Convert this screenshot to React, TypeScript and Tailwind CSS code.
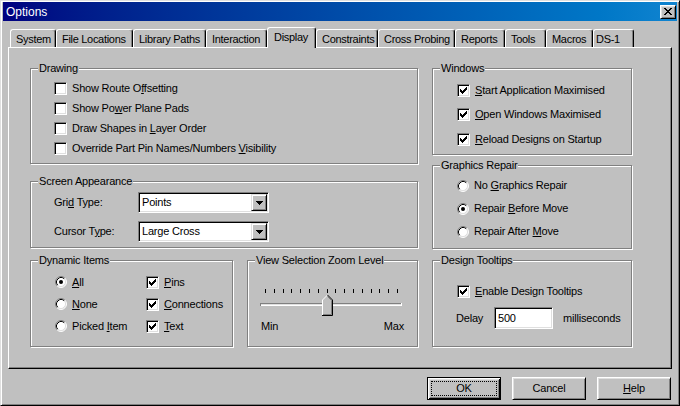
import React from 'react';

// Win98-style bevels
const raised =
  'border border-t-white border-l-white border-r-black border-b-black shadow-[inset_1px_1px_0_#dfdfdf,inset_-1px_-1px_0_#808080]';
const sunken =
  'border border-t-[#808080] border-l-[#808080] border-r-white border-b-white shadow-[inset_1px_1px_0_#000,inset_-1px_-1px_0_#dfdfdf]';

const CHECK = ['......X', '.....XX', 'X...XXX', 'XX.XXX.', 'XXXXX..', '.XXX...', '..X....'];
const CLOSE = ['XX....XX', '.XX..XX.', '..XXXX..', '...XX...', '..XXXX..', '.XX..XX.', 'XX....XX'];
const ARROW = ['XXXXXXX', '.XXXXX.', '..XXX..', '...X...'];

function Pixels({ rows }: { rows: string[] }) {
  const w = rows[0].length;
  const h = rows.length;
  return (
    <svg width={w} height={h} viewBox={`0 0 ${w} ${h}`} shapeRendering="crispEdges" className="block">
      {rows.flatMap((r, y) =>
        r.split('').map((c, x) =>
          c === 'X' ? <rect key={`${x}-${y}`} x={x} y={y} width={1} height={1} fill="#000" /> : null
        )
      )}
    </svg>
  );
}

function U({ children }: { children: React.ReactNode }) {
  return <span className="underline decoration-1 underline-offset-[1px]">{children}</span>;
}

function Check({ on }: { on?: boolean }) {
  return (
    <span className={`w-[13px] h-[13px] shrink-0 bg-white flex items-center justify-center ${sunken}`}>
      {on && <Pixels rows={CHECK} />}
    </span>
  );
}

function Radio({ on }: { on?: boolean }) {
  return (
    <svg width="12" height="12" viewBox="0 0 12 12" className="block shrink-0">
      <circle cx="6" cy="6" r="5" fill="#fff" />
      <path d="M2.11 9.89A5.5 5.5 0 0 1 9.89 2.11" stroke="#808080" fill="none" />
      <path d="M9.89 2.11A5.5 5.5 0 0 1 2.11 9.89" stroke="#fff" fill="none" />
      <path d="M2.82 9.18A4.5 4.5 0 0 1 9.18 2.82" stroke="#000" fill="none" />
      <path d="M9.18 2.82A4.5 4.5 0 0 1 2.82 9.18" stroke="#dfdfdf" fill="none" />
      {on && <circle cx="6" cy="6" r="2" fill="#000" />}
    </svg>
  );
}

function Group({ title, className = '', children }: { title: string; className?: string; children?: React.ReactNode }) {
  return (
    <div className={`relative shrink-0 border border-[#808080] shadow-[1px_1px_0_#fff,inset_1px_1px_0_#fff] ${className}`}>
      <span className="absolute left-[7px] top-[-7px] bg-[#c0c0c0] px-[1px] leading-[13px] whitespace-nowrap">{title}</span>
      {children}
    </div>
  );
}

function Combo({ value }: { value: string }) {
  return (
    <div className={`w-[131px] h-[21px] bg-white flex items-stretch p-[1px] ${sunken}`}>
      <span className="flex-1 pl-[2px] flex items-center">{value}</span>
      <span className="w-[16px] bg-[#c0c0c0] flex items-center justify-center border border-t-[#dfdfdf] border-l-[#dfdfdf] border-r-black border-b-black shadow-[inset_1px_1px_0_#fff,inset_-1px_-1px_0_#808080]">
        <Pixels rows={ARROW} />
      </span>
    </div>
  );
}

const tabs = [
  { label: 'System', w: 'w-[46px]' },
  { label: 'File Locations', w: 'w-[77px]' },
  { label: 'Library Paths', w: 'w-[73px]' },
  { label: 'Interaction', w: 'w-[61px]' },
  { label: 'Display', w: 'w-[49px]', active: true },
  { label: 'Constraints', w: 'w-[62px]' },
  { label: 'Cross Probing', w: 'w-[77px]' },
  { label: 'Reports', w: 'w-[50px]' },
  { label: 'Tools', w: 'w-[41px]' },
  { label: 'Macros', w: 'w-[47px]' },
  { label: 'DS-1', w: 'w-[41px]', tight: true },
];

export default function App() {
  return (
    <div className="w-[680px] h-[406px] overflow-hidden bg-[#c0c0c0] text-black text-[11px] tracking-[-0.2px] font-['Liberation_Sans',Arial,sans-serif] border border-t-[#dfdfdf] border-l-[#dfdfdf] border-r-black border-b-black shadow-[inset_1px_1px_0_#fff,inset_-1px_-1px_0_#808080] pt-[1px] px-[2px] flex flex-col">
      {/* Title bar */}
      <div className="h-[19px] shrink-0 flex items-center justify-between bg-linear-to-r from-[#000080] to-[#1084d0] pl-[3px] pr-[1px]">
        <span className="text-white text-[12px] tracking-normal leading-none">Options</span>
        <span className={`w-[16px] h-[14px] bg-[#c0c0c0] flex items-center justify-center ${raised}`}>
          <Pixels rows={CLOSE} />
        </span>
      </div>

      <div className="px-[5px] mt-[6px] flex flex-col">
        {/* Tabs */}
        <div className="h-[20px] flex items-end pl-[2px] tracking-[-0.3px]">
          {tabs.map((t) =>
            t.active ? (
              <div
                key={t.label}
                className={`${t.w} h-[21px] -mb-px relative z-10 shrink-0 bg-[#c0c0c0] pl-[6px] pt-[3px] leading-[13px] whitespace-nowrap overflow-hidden border-t border-l border-white border-r border-r-black rounded-t-[3px] shadow-[inset_-1px_0_0_#808080]`}
              >
                {t.label}
              </div>
            ) : (
              <div
                key={t.label}
                className={`${t.w} h-[18px] shrink-0 ${t.tight ? 'pl-[2px]' : 'pl-[5px]'} pt-[3px] leading-[13px] whitespace-nowrap overflow-hidden border-t border-l border-white border-r border-r-black rounded-t-[3px] shadow-[inset_-1px_0_0_#808080]`}
              >
                {t.label}
              </div>
            )
          )}
        </div>

        {/* Tab page */}
        <div className="h-[322px] border border-t-white border-l-white border-r-black border-b-black shadow-[inset_-1px_-1px_0_#808080] pt-[20px] pl-[21px] flex gap-[14px]">
          {/* Left column */}
          <div className="w-[388px] flex flex-col">
            <Group title="Drawing" className="h-[96px] pt-[9px] pl-[23px]">
              <div className="h-[20px] flex items-center gap-[5px]">
                <Check />
                <span>Show Route O<U>f</U>fsetting</span>
              </div>
              <div className="h-[20px] flex items-center gap-[5px]">
                <Check />
                <span>Show Po<U>w</U>er Plane Pads</span>
              </div>
              <div className="h-[20px] flex items-center gap-[5px]">
                <Check />
                <span>Draw Shapes in <U>L</U>ayer Order</span>
              </div>
              <div className="h-[20px] flex items-center gap-[5px]">
                <Check />
                <span>Override Part Pin Names/Numbers <U>V</U>isibility</span>
              </div>
            </Group>

            <Group title="Screen Appearance" className="mt-[17px] h-[67px] pt-[10px] pl-[23px] flex flex-col gap-[8px]">
              <div className="flex items-center">
                <span className="w-[84px]">Gri<U>d</U> Type:</span>
                <Combo value="Points" />
              </div>
              <div className="flex items-center">
                <span className="w-[84px]">Cursor T<U>y</U>pe:</span>
                <Combo value="Large Cross" />
              </div>
            </Group>

            <div className="mt-[12px] flex gap-[14px]">
              <Group title="Dynamic Items" className="w-[203px] h-[87px] pt-[10px] pl-[24px] grid grid-cols-[91px_auto] auto-rows-[22px]">
                <div className="flex items-center gap-[5px]">
                  <Radio on />
                  <span><U>A</U>ll</span>
                </div>
                <div className="flex items-center gap-[5px]">
                  <Check on />
                  <span><U>P</U>ins</span>
                </div>
                <div className="flex items-center gap-[5px]">
                  <Radio />
                  <span><U>N</U>one</span>
                </div>
                <div className="flex items-center gap-[5px]">
                  <Check on />
                  <span><U>C</U>onnections</span>
                </div>
                <div className="flex items-center gap-[5px]">
                  <Radio />
                  <span>Picked <U>I</U>tem</span>
                </div>
                <div className="flex items-center gap-[5px]">
                  <Check on />
                  <span><U>T</U>ext</span>
                </div>
              </Group>

              <Group title="View Selection Zoom Level" className="flex-1 h-[87px] pt-[27px] flex flex-col">
                <svg width="148" height="30" viewBox="0 0 148 30" className="block ml-[10px]">
                  {Array.from({ length: 16 }, (_, i) => (
                    <rect key={i} x={Math.round(7 + i * 8.8)} y={1} width={1} height={4} fill="#000" shapeRendering="crispEdges" />
                  ))}
                  <rect x="2" y="15" width="142" height="1" fill="#808080" shapeRendering="crispEdges" />
                  <rect x="2" y="16" width="142" height="1" fill="#dfdfdf" shapeRendering="crispEdges" />
                  <rect x="2" y="17" width="142" height="1" fill="#fff" shapeRendering="crispEdges" />
                  <rect x="2" y="15" width="1" height="3" fill="#808080" shapeRendering="crispEdges" />
                  <rect x="143" y="15" width="1" height="3" fill="#fff" shapeRendering="crispEdges" />
                  <polygon points="64.5,12 69.5,7 74.5,12 74.5,27.5 64.5,27.5" fill="#c0c0c0" />
                  <polyline points="64.5,27 64.5,12 69.5,7" stroke="#fff" fill="none" />
                  <polyline points="69.5,7 74.5,12 74.5,27.5 64,27.5" stroke="#000" fill="none" />
                  <polyline points="69.5,8.5 73.5,12.5 73.5,26.5 65,26.5" stroke="#808080" fill="none" />
                </svg>
                <div className="mt-[2px] px-[13px] flex justify-between leading-[13px]">
                  <span>Min</span>
                  <span>Max</span>
                </div>
              </Group>
            </div>
          </div>

          {/* Right column */}
          <div className="w-[200px] flex flex-col">
            <Group title="Windows" className="h-[87px] pt-[9px] pl-[24px]">
              <div className="h-[24px] flex items-center gap-[5px]">
                <Check on />
                <span><U>S</U>tart Application Maximised</span>
              </div>
              <div className="h-[25px] flex items-center gap-[5px]">
                <Check on />
                <span><U>O</U>pen Windows Maximised</span>
              </div>
              <div className="h-[24px] flex items-center gap-[5px]">
                <Check on />
                <span><U>R</U>eload Designs on Startup</span>
              </div>
            </Group>

            <Group title="Graphics Repair" className="mt-[10px] h-[84px] pt-[8px] pl-[24px]">
              <div className="h-[23px] flex items-center gap-[5px]">
                <Radio />
                <span>No <U>G</U>raphics Repair</span>
              </div>
              <div className="h-[23px] flex items-center gap-[5px]">
                <Radio on />
                <span>Repair <U>B</U>efore Move</span>
              </div>
              <div className="h-[23px] flex items-center gap-[5px]">
                <Radio />
                <span>Repair After <U>M</U>ove</span>
              </div>
            </Group>

            <Group title="Design Tooltips" className="mt-[11px] h-[87px] pt-[19px] pl-[23px]">
              <div className="h-[22px] pl-[1px] flex items-center gap-[5px]">
                <Check on />
                <span><U>E</U>nable Design Tooltips</span>
              </div>
              <div className="mt-[5px] flex items-center">
                <span className="w-[38px]">Delay</span>
                <div className={`w-[59px] h-[22px] bg-white pl-[3px] flex items-center ${sunken}`}>500</div>
                <span className="ml-[10px]">milliseconds</span>
              </div>
            </Group>
          </div>
        </div>

        {/* Dialog buttons */}
        <div className="mt-[8px] pr-[1px] flex justify-end gap-[11px]">
          <button className="w-[74px] h-[23px] flex p-[1px] border border-black shadow-[inset_1px_1px_0_#fff,inset_-1px_-1px_0_#000,inset_2px_2px_0_#dfdfdf,inset_-2px_-2px_0_#808080]">
            <span className="flex-1 m-[2px] border border-dotted border-black flex items-center justify-center">OK</span>
          </button>
          <button className={`w-[74px] h-[23px] flex items-center justify-center ${raised}`}>Cancel</button>
          <button className={`w-[74px] h-[23px] flex items-center justify-center ${raised}`}>
            <span><U>H</U>elp</span>
          </button>
        </div>
      </div>
    </div>
  );
}
